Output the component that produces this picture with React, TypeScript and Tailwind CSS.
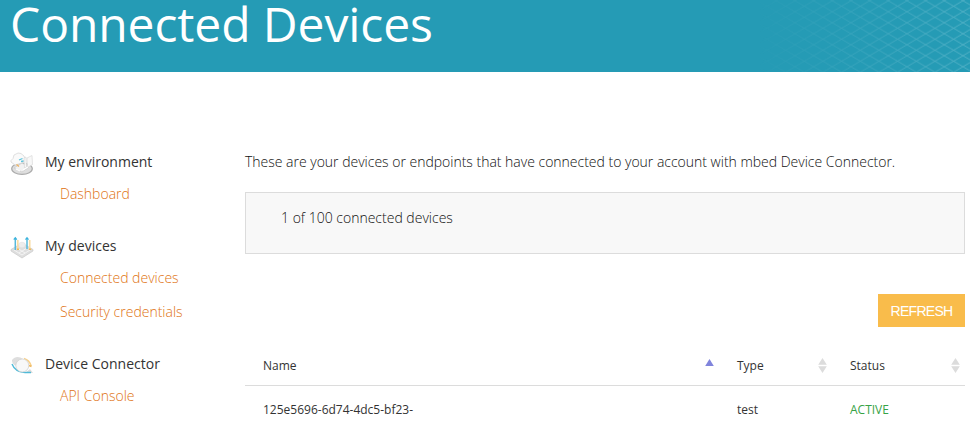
import type { ReactNode } from "react";

function HeaderMesh() {
  return (
    <svg className="absolute right-0 top-0" width="210" height="72" viewBox="0 0 210 72" fill="none">
      <defs>
        <pattern id="mesh" x="184.3" y="0.7" width="18.67" height="11" patternUnits="userSpaceOnUse">
          <path d="M0 0L18.67 11M18.67 0L0 11" stroke="#a9dce8" strokeWidth="0.8" />
        </pattern>
        <linearGradient id="fade" x1="0" x2="1" y1="0" y2="0">
          <stop offset="0" stopColor="#fff" stopOpacity="0.02" />
          <stop offset="0.5" stopColor="#fff" stopOpacity="0.2" />
          <stop offset="1" stopColor="#fff" stopOpacity="0.42" />
        </linearGradient>
        <mask id="meshMask">
          <rect width="210" height="72" fill="url(#fade)" style={{ colorInterpolation: "sRGB" }} />
        </mask>
      </defs>
      <rect width="210" height="72" fill="url(#mesh)" mask="url(#meshMask)" />
    </svg>
  );
}

function EnvironmentIcon() {
  return (
    <svg width="24" height="24" viewBox="0 0 24 24" fill="none">
      <ellipse cx="12" cy="16.8" rx="10.3" ry="5.6" fill="#dedede" stroke="#ababab" strokeWidth="1.2" />
      <path d="M4 16l8-5 7 4-7 5z" fill="#f2f2f2" stroke="#c4c4c4" strokeWidth=".6" />
      <path d="M1 8.5l2-2L4 3l4-2 3 .5 3 2.5 1 3-3 4-7 2-4-3z" fill="#fafafa" stroke="#d8d8d8" strokeWidth=".8" />
      <path d="M14 6l2-1 .5 10-2 1zM17 6l5-2.5.5 9-5 3z" fill="#f8f8f8" stroke="#d4d4d4" strokeWidth=".6" />
      <path d="M9 8l3.5-1.5M11 9.5l2.5-.5" stroke="#5cc4dc" strokeWidth="1.3" />
      <path d="M6.5 12.5l2.5 2" stroke="#f0b462" strokeWidth="1.4" />
      <path d="M6 17l4 2M13 18l5-3" stroke="#fff" strokeWidth="1.2" />
    </svg>
  );
}

function DevicesIcon() {
  return (
    <svg width="24" height="24" viewBox="0 0 24 24" fill="none">
      <path d="M1 13.5l11-6.5 11 6.5v1.5L12 22 1 15z" fill="#dedede" stroke="#cacaca" strokeWidth=".7" />
      <path d="M4 14l8 5 8-5M7 12l8 5M9 17l8-5" stroke="#f6f6f6" strokeWidth=".9" />
      <ellipse cx="12" cy="9" rx="3.4" ry="2.8" fill="#ededed" stroke="#ddd" strokeWidth=".5" />
      <path d="M5.3 3v11M17 3v10" stroke="#56b9dc" strokeWidth="1.5" />
      <path d="M7.8 4v9M19.7 4v10" stroke="#f9dca4" strokeWidth="1.7" />
      <path d="M7 13.3h2M19 13.3h2.2" stroke="#f0b95a" strokeWidth="1.6" />
      <path d="M3.8 3.6l1.5-1.8 1.5 1.8M15.5 3.6L17 1.8l1.5 1.8" stroke="#39b3dd" strokeWidth="1.3" />
    </svg>
  );
}

function ConnectorIcon() {
  return (
    <svg width="24" height="24" viewBox="0 0 24 24" fill="none">
      <path d="M2 6c3-4.5 8-3.5 11-1l-5 7c-3 0-6-2-6-6z" fill="#dedede" />
      <path d="M15 19h8l-3-4z" fill="#dcdcdc" />
      <path d="M14 4.5c4 1.2 6 3.500 7.200 7.500" stroke="#f8d08a" strokeWidth="1.5" />
      <path d="M2 10c2 5 5 9 19 8.500" stroke="#4fbad8" strokeWidth="1.4" />
      <circle cx="12.3" cy="11.5" r="6.5" fill="#f8f8f8" stroke="#d2d2d2" strokeWidth=".8" />
      <path d="M19 11.500l2.500 1" stroke="#eeb75d" strokeWidth="1.4" />
    </svg>
  );
}

function NavHeading({ icon, children }: { icon: ReactNode; children: ReactNode }) {
  return (
    <div className="flex h-6 items-center">
      <span className="mt-1 block h-6 w-[35px] shrink-0">{icon}</span>
      <h2 className="whitespace-nowrap text-sm/6 font-normal text-[#333]">{children}</h2>
    </div>
  );
}

function NavLink({ children }: { children: ReactNode }) {
  return (
    <a className="block h-[34px] pl-[50px] text-sm/[34px] font-light whitespace-nowrap text-[#e07312]">{children}</a>
  );
}

function SortIcon() {
  return (
    <svg width="9" height="15" viewBox="0 0 9 15" fill="#dcdcdc">
      <path d="M4.5 0L8.8 6.8H.2zM4.5 15L.2 8.2h8.6z" />
    </svg>
  );
}

export default function App() {
  return (
    <div className="h-[425px] w-[970px] overflow-hidden bg-white font-['Open_Sans',sans-serif] text-[#333]">
      <header className="relative h-[72px] bg-[#259bb5] pl-[10px]">
        <HeaderMesh />
        <h1 className="relative text-[48px]/[48px] tracking-[-0.1px] whitespace-nowrap text-white">Connected Devices</h1>
      </header>
      <div className="flex pt-[78px]">
        <nav className="w-[235px] shrink-0 pl-[10px]">
          <NavHeading icon={<EnvironmentIcon />}>My environment</NavHeading>
          <div className="pt-[3px] pb-[23px]"><NavLink>Dashboard</NavLink></div>
          <NavHeading icon={<DevicesIcon />}>My devices</NavHeading>
          <div className="pt-[3px] pb-[23px]">
            <NavLink>Connected devices</NavLink>
            <NavLink>Security credentials</NavLink>
          </div>
          <NavHeading icon={<ConnectorIcon />}>Device Connector</NavHeading>
          <div className="pt-[3px]"><NavLink>API Console</NavLink></div>
        </nav>
        <main className="flex w-[730px] flex-col pl-[10px]">
          <p className="text-sm/6 font-light tracking-[-0.01px] whitespace-nowrap text-[#111]">These are your devices or endpoints that have connected to your account with mbed Device Connector.</p>
          <div className="mt-[18px] h-[62px] border border-[#dcdcdc] bg-[#f8f8f8] pt-[13px] pl-[35px] text-sm/6 font-light text-[#111]">1 of 100 connected devices</div>
          <button className="mt-10 h-[33px] w-[87px] self-end bg-[#f9bc4b] pt-px font-['Liberation_Sans',sans-serif] text-sm/[32px] tracking-[-0.7px] text-white">REFRESH</button>
          <div className="mt-[19px] flex h-10 items-center border-b border-[#dcdcdc] pl-[18px] text-xs">
            <div className="flex w-[474px] items-center justify-between pr-[23px]">
              <span>Name</span>
              <svg className="-mt-1.5" width="9" height="7" viewBox="0 0 9 7" fill="#8084dc"><path d="M4.5 0L8.8 7H.2z" /></svg>
            </div>
            <div className="flex w-[113px] items-center justify-between pr-[23px]"><span>Type</span><SortIcon /></div>
            <div className="flex flex-1 items-center justify-between pr-[5px]"><span>Status</span><SortIcon /></div>
          </div>
          <div className="flex h-[47px] items-center pl-[18px] text-xs">
            <span className="w-[474px]">125e5696-6d74-4dc5-bf23-</span>
            <span className="w-[113px]">test</span>
            <span className="text-[#37a346]">ACTIVE</span>
          </div>
        </main>
      </div>
    </div>
  );
}
